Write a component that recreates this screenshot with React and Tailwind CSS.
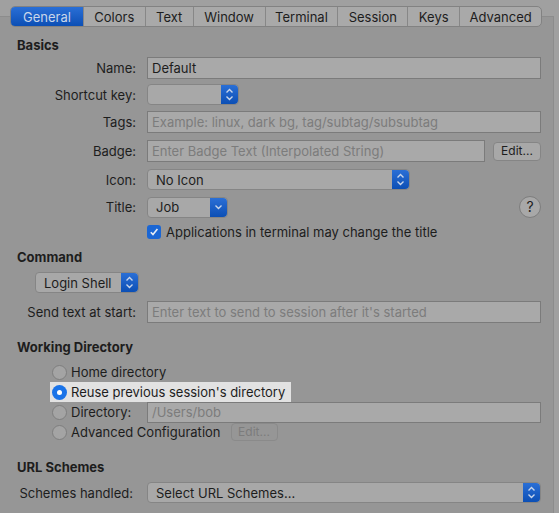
const tabs = ["General", "Colors", "Text", "Window", "Terminal", "Session", "Keys", "Advanced"];
const tabWidths = [72, 62, 48, 72, 73, 70, 52, 82];

function Stepper({ single }) {
  return (
    <div className="flex h-full w-[17px] items-center justify-center rounded-r-[4px] bg-gradient-to-b from-[#2a6fd6] to-[#0b4fb5]">
      {single ? (
        <svg width="9" height="6" viewBox="0 0 9 6">
          <path d="M1.5 1.5 L4.5 4.5 L7.5 1.5" fill="none" stroke="#c9d6ea" strokeWidth="1.4" />
        </svg>
      ) : (
        <svg width="9" height="13" viewBox="0 0 9 13">
          <path d="M1.5 4.5 L4.5 1.5 L7.5 4.5" fill="none" stroke="#c9d6ea" strokeWidth="1.4" />
          <path d="M1.5 8.5 L4.5 11.5 L7.5 8.5" fill="none" stroke="#c9d6ea" strokeWidth="1.4" />
        </svg>
      )}
    </div>
  );
}

function Popup({ w, text, single, className = "" }) {
  return (
    <div className={`flex h-[21px] items-center rounded-[4px] border border-[#858585] bg-[#a8a8a8] ${w} ${className}`}>
      <span className="flex-1 truncate pl-[8px] text-[#1d1d1d]">{text}</span>
      <Stepper single={single} />
    </div>
  );
}

function Field({ w = "w-[394px]", text, placeholder }) {
  return (
    <div className={`flex h-[22px] items-center border border-[#7b7b7b] bg-[#a9a9a9] pl-[4px] ${w}`}>
      {text ? <span className="text-[#1d1d1d]">{text}</span> : <span className="text-[#7c7c7c]">{placeholder}</span>}
    </div>
  );
}

function Row({ label, children, className = "" }) {
  return (
    <div className={`flex items-center ${className}`}>
      <div className="w-[137px] pr-[1px] text-right text-[#1d1d1d]">{label}</div>
      <div className="ml-[10px] flex items-center">{children}</div>
    </div>
  );
}

function Radio({ checked }) {
  return checked ? (
    <div className="flex h-[15px] w-[15px] items-center justify-center rounded-full bg-[#1a73e8]">
      <div className="h-[5px] w-[5px] rounded-full bg-white" />
    </div>
  ) : (
    <div className="h-[15px] w-[15px] rounded-full border border-[#7e7e7e] bg-[#a4a4a4]" />
  );
}

export default function App() {
  return (
    <div
      className="h-[513px] w-[559px] overflow-hidden bg-[#a0a0a0] pt-[6px] text-[13px] leading-[16px]"
      style={{ fontFamily: "Inter, 'Liberation Sans', sans-serif" }}
    >
      {/* tab bar */}
      <div className="relative z-10 ml-[10px] flex h-[21px] w-[532px] overflow-hidden rounded-[5px] border border-[#828282] bg-[#a9a9a9]">
        {tabs.map((t, i) => (
          <div
            key={t}
            style={{ width: tabWidths[i] }}
            className={
              i === 0
                ? "flex items-center justify-center bg-gradient-to-b from-[#2a6fd6] to-[#0b4fb5] text-[#c9d6ea]"
                : "flex items-center justify-center border-l border-[#878787] text-[#1d1d1d]"
            }
          >
            {t}
          </div>
        ))}
      </div>

      {/* panel */}
      <div className="-mt-[11px] h-[520px] w-[554px] border-r border-t border-[#8c8c8c] bg-[#969696] pt-[20px]">
        <div className="pl-[17px] font-bold text-[#1d1d1d]">Basics</div>

        <Row label="Name:" className="mt-[4px]">
          <Field text="Default" />
        </Row>
        <Row label="Shortcut key:" className="mt-[5px]">
          <Popup w="w-[92px]" text="" />
        </Row>
        <Row label="Tags:" className="mt-[6px]">
          <Field placeholder="Example: linux, dark bg, tag/subtag/subsubtag" />
        </Row>
        <Row label="Badge:" className="mt-[7px]">
          <Field w="w-[338px]" placeholder="Enter Badge Text (Interpolated String)" />
          <div className="ml-[8px] flex h-[19px] w-[48px] items-center justify-center rounded-[4px] border border-[#858585] bg-[#a8a8a8] text-[12px] text-[#1d1d1d]">
            Edit...
          </div>
        </Row>
        <Row label="Icon:" className="mt-[7px]">
          <Popup w="w-[263px]" text="No Icon" />
        </Row>
        <Row label="Title:" className="mt-[6px]">
          <Popup w="w-[81px]" text="Job" single />
          <div className="ml-[291px] flex h-[22px] w-[22px] items-center justify-center rounded-full border border-[#7d7d7d] bg-[#a8a8a8] text-[14px] text-[#1d1d1d]">
            ?
          </div>
        </Row>
        <div className="ml-[147px] mt-[6px] flex items-center">
          <div className="flex h-[14px] w-[14px] items-center justify-center rounded-[3px] bg-[#1a66d4]">
            <svg width="10" height="10" viewBox="0 0 10 10">
              <path d="M1.8 5.2 L4 7.6 L8.4 2" fill="none" stroke="#e6ecf5" strokeWidth="1.6" />
            </svg>
          </div>
          <span className="ml-[5px] text-[#1d1d1d]">Applications in terminal may change the title</span>
        </div>

        <div className="mt-[9px] pl-[17px] font-bold text-[#1d1d1d]">Command</div>
        <Popup w="w-[104px]" text="Login Shell" className="ml-[35px] mt-[7px]" />
        <Row label="Send text at start:" className="mt-[8px]">
          <Field placeholder="Enter text to send to session after it's started" />
        </Row>

        <div className="mt-[16px] pl-[17px] font-bold text-[#1d1d1d]">Working Directory</div>
        <div className="mt-[7px] flex flex-col text-[#1d1d1d]">
          <div className="ml-[52px] flex h-[20px] items-center">
            <Radio />
            <span className="ml-[4px]">Home directory</span>
          </div>
          <div className="ml-[50px] flex h-[20px] w-[241px] items-center bg-[#e2e2e2] pl-[2px]">
            <Radio checked />
            <span className="ml-[4px]">Reuse previous session's directory</span>
          </div>
          <div className="ml-[52px] flex h-[20px] items-center">
            <Radio />
            <span className="ml-[4px] w-[76px]">Directory:</span>
            <div className="flex h-[21px] w-[394px] items-center border border-[#7b7b7b] bg-[#a9a9a9] pl-[4px] text-[#7c7c7c]">
              /Users/bob
            </div>
          </div>
          <div className="ml-[52px] flex h-[20px] items-center">
            <Radio />
            <span className="ml-[4px]">Advanced Configuration</span>
            <div className="ml-[10px] flex h-[18px] w-[47px] items-center justify-center rounded-[4px] border border-[#8a8a8a] text-[12px] text-[#7c7c7c]">
              Edit...
            </div>
          </div>
        </div>

        <div className="mt-[17px] pl-[17px] font-bold text-[#1d1d1d]">URL Schemes</div>
        <div className="mt-[7px] flex items-center">
          <div className="w-[133px] text-right text-[#1d1d1d]">Schemes handled:</div>
          <Popup w="w-[394px]" text="Select URL Schemes..." className="ml-[14px]" />
        </div>
      </div>
    </div>
  );
}
